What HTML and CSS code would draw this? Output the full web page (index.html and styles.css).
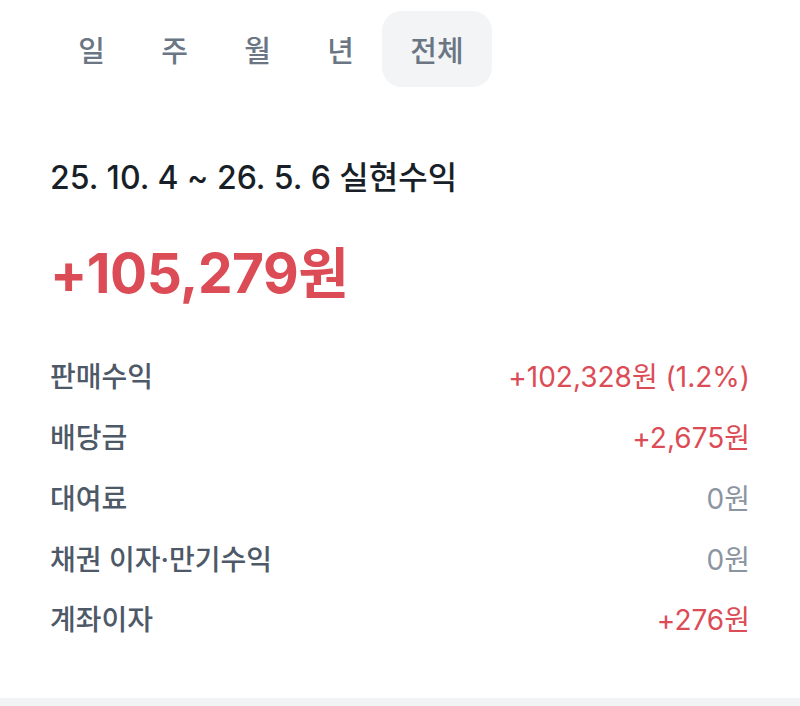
FILE: index.html
```html
<!DOCTYPE html>
<html lang="ko">
<head>
<meta charset="utf-8">
<link rel="stylesheet" href="styles.css">
</head>
<body>
<div class="page">
  <div class="tabs">
    <div class="tab">일</div>
    <div class="tab">주</div>
    <div class="tab">월</div>
    <div class="tab">년</div>
    <div class="tab active">전체</div>
  </div>
  <div class="content">
    <div class="title">25. 10. 4 ~ 26. 5. 6 실현수익</div>
    <div class="total">+105,279원</div>
    <div class="rows">
      <div class="row"><span class="label">판매수익</span><span class="value plus">+102,328원 (1.2%)</span></div>
      <div class="row"><span class="label">배당금</span><span class="value plus">+2,675원</span></div>
      <div class="row"><span class="label">대여료</span><span class="value zero">0원</span></div>
      <div class="row"><span class="label">채권 이자·만기수익</span><span class="value zero">0원</span></div>
      <div class="row"><span class="label">계좌이자</span><span class="value plus">+276원</span></div>
    </div>
  </div>
</div>
<div class="divider"></div>
</body>
</html>
```

FILE: styles.css
```css
html, body {
  margin: 0;
  padding: 0;
  background: #ffffff;
}
body {
  font-family: "Inter", "Noto Sans CJK KR", sans-serif;
  height: 706px;
  overflow: hidden;
  display: flex;
  flex-direction: column;
}
.page {
  height: 698px;
}
.tabs {
  display: flex;
  margin-top: 11px;
  padding-left: 50px;
  height: 76px;
}
.tab {
  display: flex;
  align-items: center;
  justify-content: center;
  width: 83px;
  font-size: 29px;
  font-weight: 500;
  color: #6b7684;
  border-radius: 20px;
}
.tab.active {
  background: #f2f4f6;
  width: 110px;
}
.content {
  padding: 0 50px;
}
.title {
  margin-top: 71px;
  height: 40px;
  line-height: 40px;
  font-size: 32px;
  font-weight: 500;
  color: #191f28;
}
.total {
  margin-top: 40px;
  height: 70px;
  line-height: 70px;
  font-size: 55px;
  font-weight: 700;
  color: #dc4c56;
  letter-spacing: -0.5px;
}
.rows {
  margin-top: 37px;
  display: flex;
  flex-direction: column;
}
.row {
  display: flex;
  justify-content: space-between;
  align-items: center;
  height: 60.75px;
  font-size: 28px;
}
.label {
  color: #4e5968;
  font-weight: 500;
}
.value {
  font-weight: 400;
}
.value.plus {
  color: #dc4c56;
}
.value.zero {
  color: #8b95a1;
}
.divider {
  flex: 1;
  background: #f2f3f5;
}
```
